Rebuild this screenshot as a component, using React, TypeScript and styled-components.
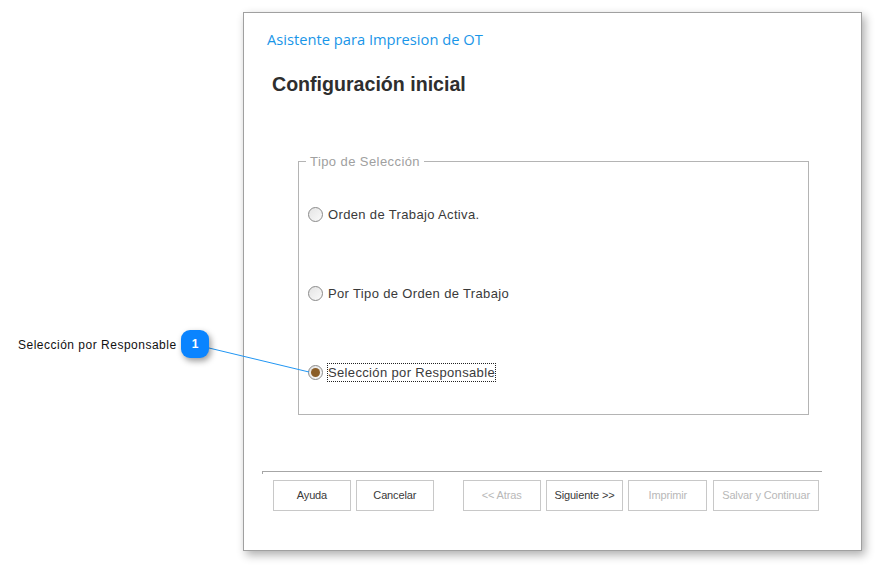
import styled, { createGlobalStyle } from "styled-components";

const GlobalStyle = createGlobalStyle`
  html, body {
    margin: 0;
    padding: 0;
    background: #fff;
  }
  body {
    font-family: "Liberation Sans", Arial, sans-serif;
  }
`;

const Page = styled.div`
  position: relative;
  width: 879px;
  height: 567px;
  overflow: hidden;
  display: flex;
  align-items: flex-start;
`;

const Callout = styled.div`
  width: 243px;
  box-sizing: border-box;
  padding: 330px 0 0 18px;
  display: flex;
  align-items: center;
  gap: 5px;
`;

const CalloutLabel = styled.span`
  width: 158px;
  padding-top: 1px;
  font-size: 12px;
  letter-spacing: 0.5px;
  color: #111;
  white-space: nowrap;
`;

const Badge = styled.span`
  position: relative;
  z-index: 2;
  width: 28px;
  height: 28px;
  flex: none;
  display: flex;
  align-items: center;
  justify-content: center;
  border-radius: 9px;
  background: #0a84ff;
  box-shadow: 2px 3px 6px rgba(0, 0, 0, 0.4);
  color: #fff;
  font-size: 12px;
  font-weight: 700;
`;

const Leader = styled.svg`
  position: absolute;
  left: 0;
  top: 0;
  z-index: 1;
  pointer-events: none;
`;

const Wizard = styled.div`
  width: 619px;
  height: 539px;
  margin-top: 12px;
  box-sizing: border-box;
  padding: 16px 39px 0 23px;
  border: 1px solid #a0a0a0;
  background: #fff;
  box-shadow: 3px 4px 9px rgba(0, 0, 0, 0.32);
  display: flex;
  flex-direction: column;
`;

const WizardName = styled.div`
  font-family: "Open Sans", sans-serif;
  font-size: 14.7px;
  line-height: 20px;
  color: #1a96e8;
  white-space: nowrap;
`;

const Title = styled.h1`
  margin: 23px 0 0 5px;
  font-size: 19.6px;
  line-height: 24px;
  font-weight: 700;
  color: #2e2e2e;
`;

const Group = styled.fieldset`
  margin: 56px 13px 0 31px;
  padding: 0;
  height: 263px;
  box-sizing: border-box;
  border: 1px solid #b4b4b4;
  display: flex;
  flex-direction: column;
`;

const GroupTitle = styled.legend`
  margin-left: 7px;
  padding: 2px 4px 0;
  font-size: 13px;
  line-height: 16px;
  letter-spacing: 0.42px;
  color: #a0a0a0;
`;

const Options = styled.div`
  padding: 35px 0 0 9px;
  display: flex;
  flex-direction: column;
  gap: 61px;
`;

const Option = styled.div`
  height: 18px;
  display: flex;
  align-items: center;
  gap: 5px;
`;

const Radio = styled.span<{ $checked?: boolean }>`
  width: 13px;
  height: 13px;
  flex: none;
  display: flex;
  align-items: center;
  justify-content: center;
  border-radius: 50%;
  border: 1px solid #8a8a8a;
  background: linear-gradient(135deg, #e4e4e4, #fafafa);
  &::after {
    content: "";
    display: ${(p) => (p.$checked ? "block" : "none")};
    width: 9px;
    height: 9px;
    border-radius: 50%;
    background: #8b5e28;
  }
`;

const OptionLabel = styled.span<{ $focused?: boolean }>`
  padding-top: 1px;
  font-size: 13px;
  line-height: 16px;
  letter-spacing: 0.35px;
  color: #3a3a3a;
  white-space: nowrap;
  outline: ${(p) => (p.$focused ? "1px dotted #222" : "none")};
`;

const Footer = styled.div`
  position: relative;
  margin: 56px 0 0 -5px;
  border-top: 1px solid #a6a6a6;
  padding: 8px 3px 0 11px;
  display: flex;
  gap: 5px;
  &::before {
    content: "";
    position: absolute;
    left: 0;
    top: 0;
    width: 1px;
    height: 2px;
    background: #a6a6a6;
  }
`;

const WizardButton = styled.div<{ $disabled?: boolean; $width?: number; $gapBefore?: number }>`
  width: ${(p) => p.$width ?? 78}px;
  height: 31px;
  box-sizing: border-box;
  margin-left: ${(p) => p.$gapBefore ?? 0}px;
  padding-bottom: 1px;
  display: flex;
  align-items: center;
  justify-content: center;
  border: 1px solid #c8c8c8;
  font-size: 11px;
  letter-spacing: -0.15px;
  color: ${(p) => (p.$disabled ? "#b8b8b8" : "#3a3a3a")};
  white-space: nowrap;
`;

const options = [
  { label: "Orden de Trabajo Activa." },
  { label: "Por Tipo de Orden de Trabajo" },
  { label: "Selección por Responsable", selected: true },
];

export default function App() {
  return (
    <Page>
      <GlobalStyle />
      <Callout>
        <CalloutLabel>Selección por Responsable</CalloutLabel>
        <Badge>1</Badge>
      </Callout>
      <Leader width="879" height="567">
        <line x1="209" y1="348" x2="309" y2="372" stroke="#2196f3" strokeWidth="1" />
      </Leader>
      <Wizard>
        <WizardName>Asistente para Impresion de OT</WizardName>
        <Title>Configuración inicial</Title>
        <Group>
          <GroupTitle>Tipo de Selección</GroupTitle>
          <Options>
            {options.map((item) => (
              <Option key={item.label}>
                <Radio $checked={item.selected} />
                <OptionLabel $focused={item.selected}>{item.label}</OptionLabel>
              </Option>
            ))}
          </Options>
        </Group>
        <Footer>
          <WizardButton>Ayuda</WizardButton>
          <WizardButton>Cancelar</WizardButton>
          <WizardButton $disabled $gapBefore={24}>&lt;&lt; Atras</WizardButton>
          <WizardButton>Siguiente &gt;&gt;</WizardButton>
          <WizardButton $disabled $width={79}>Imprimir</WizardButton>
          <WizardButton $disabled $width={106} $gapBefore={1}>Salvar y Continuar</WizardButton>
        </Footer>
      </Wizard>
    </Page>
  );
}
